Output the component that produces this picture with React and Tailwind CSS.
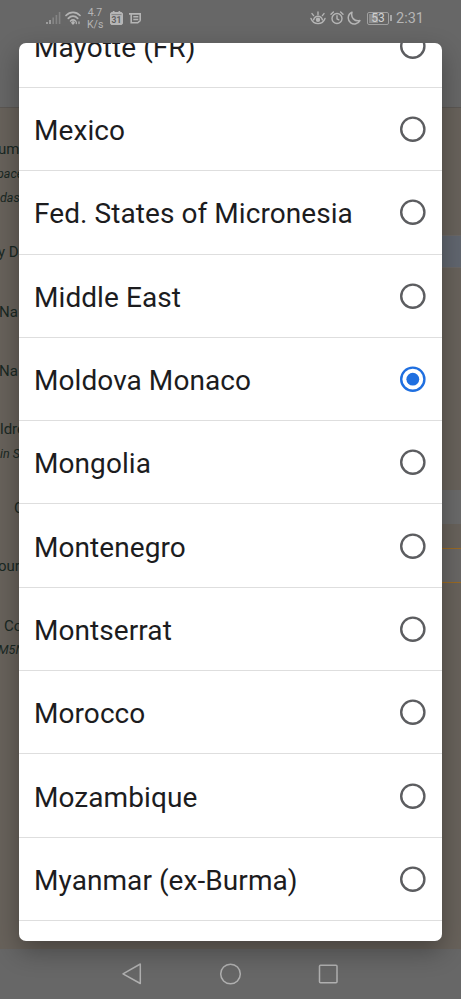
import React, { useState } from 'react';

const countries = [
  'Mayotte (FR)',
  'Mexico',
  'Fed. States of Micronesia',
  'Middle East',
  'Moldova Monaco',
  'Mongolia',
  'Montenegro',
  'Montserrat',
  'Morocco',
  'Mozambique',
  'Myanmar (ex-Burma)',
];

// Form labels that peek out on the left of the dialog
const labels = [
  { text: 'um', className: 'mt-[31px] -ml-[2px] text-[15px]' },
  { text: 'pace', className: 'mt-[5px] -ml-[3px] text-[12.5px] italic' },
  { text: 'das', className: 'mt-[4px] text-[12.5px] italic' },
  { text: 'y D', className: 'mt-[34px] -ml-[2px] text-[15px]' },
  { text: 'Na', className: 'mt-[40px] -ml-[1px] text-[15px]' },
  { text: 'Na', className: 'mt-[39px] -ml-[1px] text-[15px]' },
  { text: 'ldre', className: 'mt-[38px] text-[15px]' },
  { text: 'in S', className: 'mt-[5px] text-[12.5px] italic' },
  { text: 'C', className: 'mt-[34px] ml-[14px] text-[15px]' },
  { text: 'our', className: 'mt-[38px] -ml-[2px] text-[15px]' },
  { text: 'Co', className: 'mt-[40px] ml-[4px] text-[15px]' },
  { text: 'M5N', className: 'mt-[4px] -ml-[2px] text-[12.5px] italic' },
];

function StatusBar() {
  return (
    <div className="flex h-[36px] items-center text-[#b5b5b5]">
      <svg className="ml-[46px]" width="15" height="14" viewBox="0 0 15 14" fill="none" strokeWidth="1.6">
        <path d="M1 11v2M4 9v4" stroke="#aaaaaa" />
        <path d="M7.2 6.5V13M10.4 4v9M13.6 1v12" stroke="#858585" />
      </svg>
      <svg className="ml-[4px]" width="16" height="14" viewBox="0 0 16 14" fill="none" stroke="currentColor" strokeWidth="1.7" strokeLinecap="round">
        <path d="M1 4.5C5 .3 11 .3 15 4.5M3.3 7.3c2.8-2.8 6.6-2.8 9.4 0M5.6 10c1.5-1.4 3.3-1.4 4.8 0" />
        <path d="M8 10.500l1.200 1.200L8 13l-1.200-1.300zM11.300 10.800v1.800M14 10.800v1.800" strokeWidth="1.2" />
      </svg>
      <div className="ml-[6px] w-[16px] pt-px text-center text-[10.5px] leading-[11.5px]">
        <div>4.7</div>
        <div>K/s</div>
      </div>
      <svg className="ml-[7px]" width="13" height="14" viewBox="0 0 13 14">
        <path d="M1.5 1h1.3V0h1.7v1h4V0h1.7v1h1.3L13 2.4v10.2L11.6 14H1.4L0 12.6V2.4z" fill="currentColor" />
        <path d="M1.5 3.6h10" stroke="#777777" strokeWidth=".8" />
        <text x="6.5" y="11.5" textAnchor="middle" fontSize="8.5" fontWeight="700" fill="#606060">31</text>
      </svg>
      <svg className="ml-[6px]" width="12" height="11" viewBox="0 0 12 11" fill="none" stroke="currentColor" strokeWidth="1.6">
        <path d="M0 .9h11.2v6.800M2.200 0v9.800h6.500l2.500-2.100M4.300 3.800h5M4.300 6.500h5" />
      </svg>
      <svg className="ml-[169px]" width="16" height="14" viewBox="0 0 16 14" fill="none" stroke="currentColor" strokeWidth="1.4" strokeLinecap="round">
        <path d="M1 7.500c2.500 6.800 11.500 6.800 14 0M3.600 8.800c1.500-4.800 7.300-4.800 8.800 0M8 3.500V1M3.600 4.600L2 2.600M12.400 4.600L14 2.600" />
        <circle cx="8" cy="8.700" r="1.500" fill="currentColor" />
      </svg>
      <svg className="ml-[4px]" width="14" height="14" viewBox="0 0 14 14" fill="none" stroke="currentColor" strokeWidth="1.4" strokeLinecap="round">
        <circle cx="7" cy="7.5" r="5" />
        <path d="M7 4.800v3l1.800 1M1 3.200L3.400 1M13 3.200L10.600 1" />
      </svg>
      <svg className="ml-[3px]" width="14" height="14" viewBox="0 0 14 14" fill="none" stroke="currentColor" strokeWidth="1.5" strokeLinejoin="round">
        <path d="M5 1.200C.3 3 .2 9.500 3.700 11.800c3.200 2.200 7.500 1 9.200-2.200C7.500 10.900 3.500 6.500 5 1.200z" />
      </svg>
      <div className="ml-[6px] flex h-[13px] w-[22px] items-center justify-center rounded-[2px] border border-[#a0a0a0] p-px">
        <div className="flex h-full w-full items-center justify-center bg-gradient-to-r from-[#8c8c8c] from-50% to-transparent to-50% text-[12px] leading-none text-[#d0d0d0]">53</div>
      </div>
      <div className="ml-px h-[6px] w-[2px] bg-[#a8a8a8]" />
      <div className="ml-[4px] pt-[2px] text-[14.5px] leading-none">2:31</div>
    </div>
  );
}

function PageBehind() {
  return (
    <div className="flex h-[842px] justify-between border-t border-[#5b5753] bg-[#68625b]">
      <div className="w-[19px] overflow-hidden whitespace-nowrap text-[#192823]">
        {labels.map((label, i) => (
          <div key={i} className={`h-[20px] leading-[20px] ${label.className}`}>{label.text}</div>
        ))}
      </div>
      <div className="w-[19px]">
        <div className="mt-[127px] h-[33px] border-y border-[#6b6866] bg-[#61666f]" />
        <div className="mt-[222px] h-[34px] bg-[#6a6a6a]" />
        <div className="mt-[24px] h-[35px] border-y border-[#9a6a24] bg-[#696765]" />
      </div>
    </div>
  );
}

function NavBar() {
  return (
    <div className="flex h-[50px] items-center bg-[#676767] text-[#b0b0b0]">
      <svg className="ml-[121px]" width="22" height="24" viewBox="0 0 22 24" fill="none" stroke="currentColor" strokeWidth="1.5" strokeLinejoin="round">
        <path d="M19.300 2v19.500L2 11.800z" />
      </svg>
      <svg className="ml-[76px]" width="23" height="23" viewBox="0 0 23 23" fill="none" stroke="currentColor" strokeWidth="1.5">
        <circle cx="11.5" cy="11" r="9.8" />
      </svg>
      <svg className="ml-[76px]" width="21" height="21" viewBox="0 0 21 21" fill="none" stroke="currentColor" strokeWidth="1.5">
        <rect x="1.5" y="1.2" width="17.500" height="17.500" rx="1" />
      </svg>
    </div>
  );
}

function Radio({ checked }) {
  return (
    <svg width="26" height="26" viewBox="0 0 26 26" fill="none" className={checked ? 'text-[#1f6fe0]' : 'text-[#5c5d60]'}>
      <circle cx="12.8" cy="13.2" r="11.6" stroke="currentColor" strokeWidth="2.4" />
      {checked && <circle cx="12.8" cy="13.2" r="6.4" fill="currentColor" />}
    </svg>
  );
}

export default function App() {
  const [selected, setSelected] = useState('Moldova Monaco');

  return (
    <div className="relative h-[999px] w-[461px] overflow-hidden font-['Roboto',sans-serif]">
      <div className="h-[107px] bg-[#676767]">
        <StatusBar />
      </div>
      <PageBehind />
      <NavBar />

      <div className="absolute top-[43px] left-[19px] h-[898px] w-[423px] overflow-hidden rounded-[7px] bg-white shadow-[0_10px_26px_rgba(0,0,0,0.32)]">
        <div className="-mt-[38.3px]">
          {countries.map(name => (
            <button
              key={name}
              onClick={() => setSelected(name)}
              className="flex h-[83.3px] w-full items-center justify-between border-b border-[#dedede] pr-[16px] pl-[15px] text-left"
            >
              <span className="pt-[4px] text-[28px] leading-none tracking-[0.07px] text-[#1c1c1e]">{name}</span>
              <Radio checked={selected === name} />
            </button>
          ))}
        </div>
      </div>
    </div>
  );
}
